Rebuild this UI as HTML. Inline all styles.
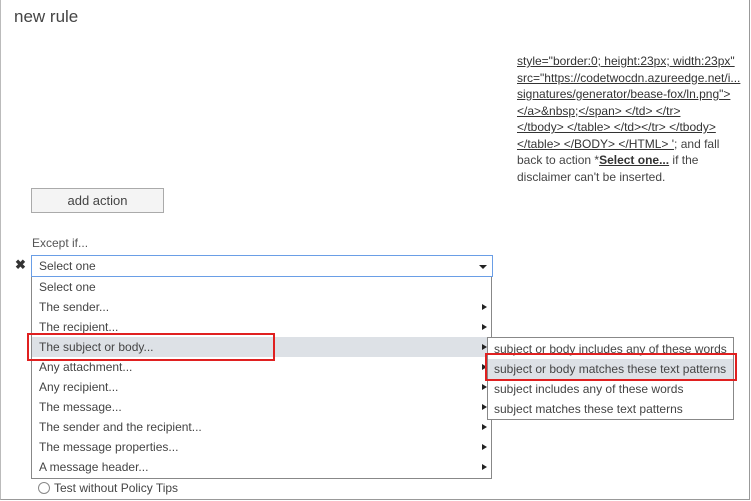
<!DOCTYPE html><html><head><style>
body{margin:0;width:751px;height:501px;background:#fff;font-family:"Liberation Sans",sans-serif;color:#333;position:relative;overflow:hidden;font-size:12px}
.a{position:absolute}
.fr{left:0;top:0;width:748px;height:499px;border-right:1px solid #999;border-bottom:1px solid #999;border-left:1px solid #bbb}
.rt{left:517px;top:55px;width:230px;line-height:16.5px;font-size:12px;color:#444}
.rt u{color:#333}
.it{left:32px;width:459px;height:20px;line-height:20px;padding-left:7px;box-sizing:border-box;color:#444}
.ar{position:absolute;right:4px;top:7px;border-left:5px solid #222;border-top:3.5px solid transparent;border-bottom:3.5px solid transparent}
.si{left:488px;width:245px;height:20px;line-height:20px;padding-left:6px;box-sizing:border-box;color:#444}
</style></head><body>
<div class="a fr"></div>
<div class="a" style="left:14px;top:7px;font-size:17px;color:#444">new rule</div>
<div class="a rt" style="overflow:hidden;height:130px"><div style="margin-top:-2px"><u>style="border:0; height:23px; width:23px"</u><br><u>src="https://codetwocdn.azureedge.net/i...</u><br><u>signatures/generator/bease-fox/ln.png"&gt;</u><br><u>&lt;/a&gt;&amp;nbsp;&lt;/span&gt; &lt;/td&gt; &lt;/tr&gt;</u><br><u>&lt;/tbody&gt; &lt;/table&gt; &lt;/td&gt;&lt;/tr&gt; &lt;/tbody&gt;</u><br><u>&lt;/table&gt; &lt;/BODY&gt; &lt;/HTML&gt; '</u>; and fall<br>back to action *<u><b>Select one...</b></u> if the<br>disclaimer can't be inserted.</div></div>
<div class="a" style="left:31px;top:188px;width:131px;height:23px;border:1px solid #aaa;background:#f4f4f4;text-align:center;line-height:23px;font-size:13px;color:#444">add action</div>
<div class="a" style="left:32px;top:236px;color:#555">Except if...</div>
<div class="a" style="left:15px;top:257px;font-size:13px;font-weight:bold;color:#333">✖</div>
<div class="a" style="left:31px;top:255px;height:20px;border:1px solid #6a9ee6;line-height:20px;padding-left:7px;box-sizing:content-box;width:453px;color:#444">Select one<div class="a" style="right:5px;top:9px;border-top:4px solid #222;border-left:4px solid transparent;border-right:4px solid transparent"></div></div>
<div class="a" style="left:31px;top:277px;width:459px;height:201px;border:1px solid #888;border-top:none"></div>
<div class="a it" style="top:277px">Select one</div>
<div class="a it" style="top:297px">The sender...<i class="ar"></i></div>
<div class="a it" style="top:317px">The recipient...<i class="ar"></i></div>
<div class="a it" style="top:337px;background:#dde1e6">The subject or body...<i class="ar"></i></div>
<div class="a it" style="top:357px">Any attachment...<i class="ar"></i></div>
<div class="a it" style="top:377px">Any recipient...<i class="ar"></i></div>
<div class="a it" style="top:397px">The message...<i class="ar"></i></div>
<div class="a it" style="top:417px">The sender and the recipient...<i class="ar"></i></div>
<div class="a it" style="top:437px">The message properties...<i class="ar"></i></div>
<div class="a it" style="top:457px">A message header...<i class="ar"></i></div>
<div class="a" style="left:27px;top:333px;width:244px;height:24px;border:2px solid #e02020"></div>
<div class="a" style="left:487px;top:337px;width:245px;height:81px;border:1px solid #888;background:#fff"></div>
<div class="a si" style="top:339px">subject or body includes any of these words</div>
<div class="a si" style="top:359px;background:#dde1e6">subject or body matches these text patterns</div>
<div class="a si" style="top:379px">subject includes any of these words</div>
<div class="a si" style="top:399px">subject matches these text patterns</div>
<div class="a" style="left:485px;top:353px;width:248px;height:24px;border:2px solid #e02020"></div>
<div class="a" style="left:38px;top:482px;width:10px;height:10px;border:1px solid #888;border-radius:50%"></div>
<div class="a" style="left:54px;top:481px;color:#444">Test without Policy Tips</div>
</body></html>
